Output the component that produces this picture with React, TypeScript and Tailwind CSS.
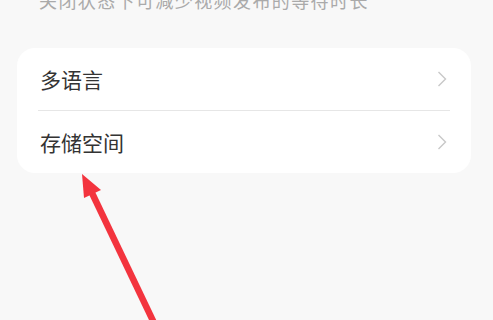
const font = { fontFamily: '"Noto Sans CJK SC", "Noto Sans", sans-serif' };

function Chevron() {
  return (
    <svg width="10" height="16" viewBox="0 0 10 16" className="shrink-0">
      <polyline points="1.5,1 8.5,8 1.5,15" fill="none" stroke="#c8c8c8" strokeWidth="1.4" />
    </svg>
  );
}

function Row({ label }: { label: string }) {
  return (
    <div className="flex h-[62px] items-center justify-between pl-[2px] pr-[3px]">
      <span className="text-[21px] leading-none text-[#333333]">{label}</span>
      <Chevron />
    </div>
  );
}

export default function App() {
  return (
    <div className="relative h-[320px] w-[493px] overflow-hidden bg-[#f8f8f8]" style={font}>
      <p className="mt-[-12px] pl-[39px] text-[18px] leading-[24px] tracking-[1.4px] text-[#aaaaaa]">
        关闭状态下可减少视频发布的等待时长
      </p>
      <div className="mx-[17px] mt-[36px] w-[454px] rounded-[18px] bg-white px-[21px]">
        <Row label="多语言" />
        <div className="h-px bg-[#e6e6e6]" />
        <Row label="存储空间" />
      </div>
      <svg className="pointer-events-none absolute left-0 top-0" width="493" height="320" viewBox="0 0 493 320">
        <line x1="92" y1="193" x2="155" y2="325" stroke="#f3343e" strokeWidth="6.5" />
        <polygon points="82,174 84,198 101,190" fill="#f3343e" />
      </svg>
    </div>
  );
}
